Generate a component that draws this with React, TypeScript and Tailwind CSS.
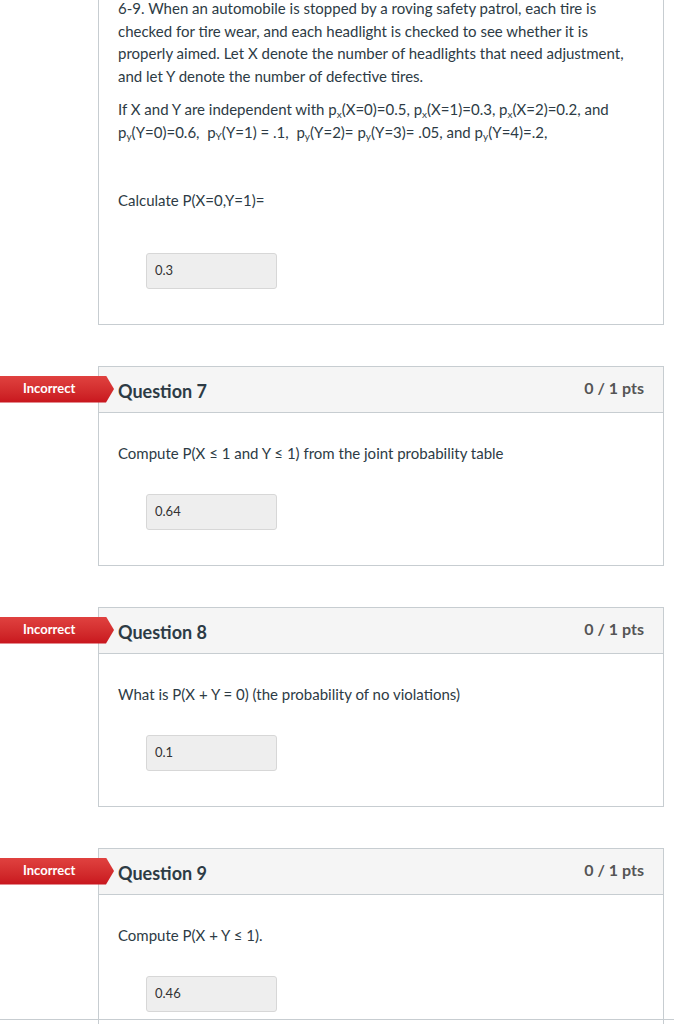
import React from "react";

function Answer({ value }: { value: string }) {
  return (
    <div className="ml-[28px] w-[131px] h-[36px] bg-[#eeeeee] border border-[#d7d7d7] rounded-[3px] flex items-center px-[8px] text-[13px] text-[#333]">
      {value}
    </div>
  );
}

function Question({
  num,
  text,
  value,
}: {
  num: number;
  text: React.ReactNode;
  value: string;
}) {
  return (
    <div className="relative mt-[41px] border border-[#c7cdd1] bg-white">
      {/* Incorrect banner */}
      <div
        className="absolute left-[-99px] top-[9px] h-[27px] w-[114px] bg-gradient-to-b from-[#e0413f] to-[#c8141d] flex items-center pl-[23px] text-white text-[13px] font-bold"
        style={{ clipPath: "polygon(0 0, 106px 0, 114px 50%, 106px 100%, 0 100%)" }}
      >
        Incorrect
      </div>
      <div className="h-[46px] bg-[#f5f5f5] border-b border-[#c7cdd1] flex items-center justify-between pl-[19px] pr-[19px]">
        <span className="text-[18px] font-bold text-[#2d3b45] mt-[5px]">Question {num}</span>
        <span className="text-[16px] font-bold text-[#555] -mt-[3px]">0 / 1 pts</span>
      </div>
      <div className="pl-[19px] pr-[19px] pt-[29px] pb-[35px]">
        <p className="text-[15px] leading-[22px] text-[#2d3b45]">{text}</p>
        <div className="mt-[30px]">
          <Answer value={value} />
        </div>
      </div>
    </div>
  );
}

export default function App() {
  return (
    <div
      className="relative w-[674px] h-[1024px] overflow-hidden bg-white"
      style={{ fontFamily: "Lato, 'Open Sans', sans-serif" }}
    >
      <div className="ml-[98px] mr-[10px]">
        {/* Question 6 (continued) */}
        <div className="border-l border-r border-b border-[#c7cdd1] bg-white">
          <div className="pl-[19px] pr-[19px] pb-[35px] -mt-[3px] text-[15px] leading-[22.5px] text-[#2d3b45]">
            <p>
              6-9. When an automobile is stopped by a roving safety patrol, each tire is
              checked for tire wear, and each headlight is checked to see whether it is
              properly aimed. Let X denote the number of headlights that need adjustment,
              and let Y denote the number of defective tires.
            </p>
            <p className="mt-[11px]">
              If X and Y are independent with p<sub className="text-[10px]">x</sub>(X=0)=0.5, p
              <sub className="text-[10px]">x</sub>(X=1)=0.3, p<sub className="text-[10px]">x</sub>(X=2)=0.2, and
              <br />
              p<sub className="text-[10px]">y</sub>(Y=0)=0.6,&nbsp; p<sub className="text-[10px]">Y</sub>(Y=1) = .1,&nbsp; p
              <sub className="text-[10px]">y</sub>(Y=2)= p<sub className="text-[10px]">y</sub>(Y=3)= .05, and p
              <sub className="text-[10px]">y</sub>(Y=4)=.2,
            </p>
            <p className="mt-[46px]">Calculate P(X=0,Y=1)=</p>
            <div className="mt-[41px]">
              <Answer value="0.3" />
            </div>
          </div>
        </div>

        <Question num={7} text="Compute P(X ≤ 1 and Y ≤ 1) from the joint probability table" value="0.64" />
        <Question num={8} text="What is P(X + Y = 0) (the probability of no violations)" value="0.1" />
        <Question num={9} text="Compute P(X + Y ≤ 1)." value="0.46" />
      </div>
      {/* bottom edge line */}
      <div className="absolute left-0 right-0 top-[1019px] h-[1px] bg-[#c7cdd1]" />
    </div>
  );
}
